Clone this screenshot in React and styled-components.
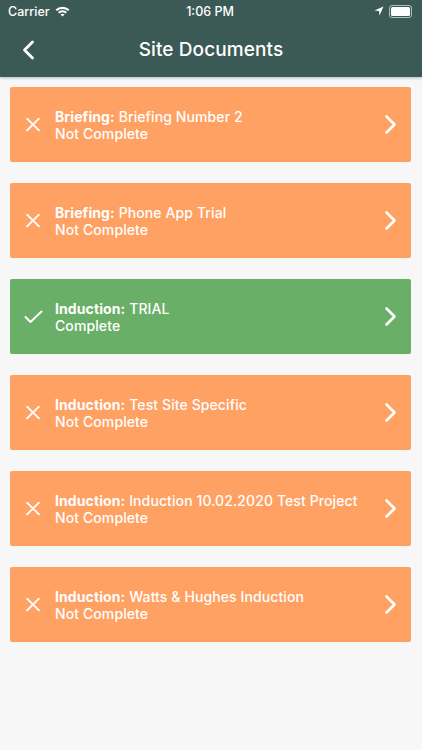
import React from "react";
import styled, { createGlobalStyle } from "styled-components";

const GlobalStyle = createGlobalStyle`
  html, body {
    margin: 0;
    padding: 0;
    background: #f7f7f7;
    font-family: "Inter", "Liberation Sans", Arial, sans-serif;
  }
`;

const documents = [
  { type: "Briefing", name: "Briefing Number 2", complete: false },
  { type: "Briefing", name: "Phone App Trial", complete: false },
  { type: "Induction", name: "TRIAL", complete: true },
  { type: "Induction", name: "Test Site Specific", complete: false },
  { type: "Induction", name: "Induction 10.02.2020 Test Project", complete: false },
  { type: "Induction", name: "Watts & Hughes Induction", complete: false },
];

const Screen = styled.div`
  width: 422px;
  min-height: 750px;
  background: #f7f7f7;
`;

const Header = styled.header`
  background: #3c5a55;
  color: #fff;
  box-shadow: 0 1px 3px rgba(0, 0, 0, 0.25);
`;

const StatusBar = styled.div`
  height: 22px;
  display: grid;
  grid-template-columns: 1fr auto 1fr;
  align-items: center;
  padding: 0 10px 0 8px;
  font-size: 12.5px;
  font-weight: 500;
`;

const StatusLeft = styled.div`
  display: flex;
  align-items: center;
  gap: 5px;
`;

const StatusRight = styled.div`
  display: flex;
  align-items: center;
  justify-content: flex-end;
  gap: 5px;
`;

const Battery = styled.div`
  width: 19px;
  height: 9px;
  border: 1px solid rgba(255, 255, 255, 0.6);
  border-radius: 3px;
  padding: 1px;
  &::before {
    content: "";
    display: block;
    height: 100%;
    background: #fff;
    border-radius: 1.5px;
  }
`;

const NavBar = styled.div`
  height: 55px;
  display: flex;
  align-items: center;
  justify-content: center;
  position: relative;
`;

const BackButton = styled.button`
  position: absolute;
  left: 18px;
  top: 50%;
  transform: translateY(-50%);
  background: none;
  border: none;
  padding: 4px;
  display: flex;
`;

const Title = styled.h1`
  margin: 0;
  font-size: 19px;
  font-weight: 500;
  letter-spacing: 0.1px;
`;

const List = styled.div`
  display: flex;
  flex-direction: column;
  gap: 21px;
  padding: 10px 11px 0 10px;
`;

const Card = styled.div`
  height: 75px;
  border-radius: 2px;
  background: ${(p) => (p.$complete ? "#6aaf68" : "#ffa163")};
  color: #fff;
  display: flex;
  align-items: center;
  padding: 0 14px 0 16px;
  gap: 15px;

  svg {
    flex-shrink: 0;
  }
`;

const StatusIcon = styled.div`
  width: 14px;
  flex-shrink: 0;
  display: flex;
  justify-content: center;
`;

const Text = styled.div`
  flex: 1;
  font-size: 14px;
  font-weight: 500;
  line-height: 17px;
  letter-spacing: 0.1px;
`;

const Label = styled.span`
  font-weight: 700;
`;

const CloseIcon = () => (
  <svg width="14" height="13" viewBox="0 0 14 13">
    <path d="M1 0.5 L13 12.5 M13 0.5 L1 12.5" stroke="#fff" strokeWidth="1.8" strokeLinecap="round" />
  </svg>
);

const CheckIcon = () => (
  <svg width="19" height="14" viewBox="0 0 19 14">
    <path d="M1.5 7 L6.5 12 L17.5 1.5" fill="none" stroke="#fff" strokeWidth="2" strokeLinecap="round" strokeLinejoin="round" />
  </svg>
);

const Chevron = () => (
  <svg width="13" height="21" viewBox="0 0 13 21">
    <path d="M2.5 2.5 L10.5 10.5 L2.5 18.5" fill="none" stroke="#fff" strokeWidth="2.6" strokeLinecap="round" strokeLinejoin="round" />
  </svg>
);

const BackChevron = () => (
  <svg width="13" height="20" viewBox="0 0 13 20">
    <path d="M10.5 2 L2.5 10 L10.5 18" fill="none" stroke="#fff" strokeWidth="2.8" strokeLinecap="round" strokeLinejoin="round" />
  </svg>
);

const WifiIcon = () => (
  <svg width="15" height="11" viewBox="0 0 15 11">
    <path d="M0.5 3.6 A10 10 0 0 1 14.5 3.6 L13 5.1 A8 8 0 0 0 2 5.1 Z" fill="#fff" />
    <path d="M3 6.1 A6.5 6.5 0 0 1 12 6.1 L10.5 7.6 A4.4 4.4 0 0 0 4.5 7.6 Z" fill="#fff" />
    <path d="M5.5 8.6 A3 3 0 0 1 9.5 8.6 L7.5 10.6 Z" fill="#fff" />
  </svg>
);

const LocationIcon = () => (
  <svg width="10" height="10" viewBox="0 0 10 10">
    <path d="M9.5 0.5 L0.5 4.5 L5 5 L5.5 9.5 Z" fill="#fff" />
  </svg>
);

const App = () => (
  <Screen>
    <GlobalStyle />
    <Header>
      <StatusBar>
        <StatusLeft>
          Carrier
          <WifiIcon />
        </StatusLeft>
        <div>1:06 PM</div>
        <StatusRight>
          <LocationIcon />
          <Battery />
        </StatusRight>
      </StatusBar>
      <NavBar>
        <BackButton aria-label="Back">
          <BackChevron />
        </BackButton>
        <Title>Site Documents</Title>
      </NavBar>
    </Header>
    <List>
      {documents.map((doc, i) => (
        <Card key={i} $complete={doc.complete}>
          <StatusIcon>{doc.complete ? <CheckIcon /> : <CloseIcon />}</StatusIcon>
          <Text>
            <div>
              <Label>{doc.type}:</Label> {doc.name}
            </div>
            <div>{doc.complete ? "Complete" : "Not Complete"}</div>
          </Text>
          <Chevron />
        </Card>
      ))}
    </List>
  </Screen>
);

export default App;
